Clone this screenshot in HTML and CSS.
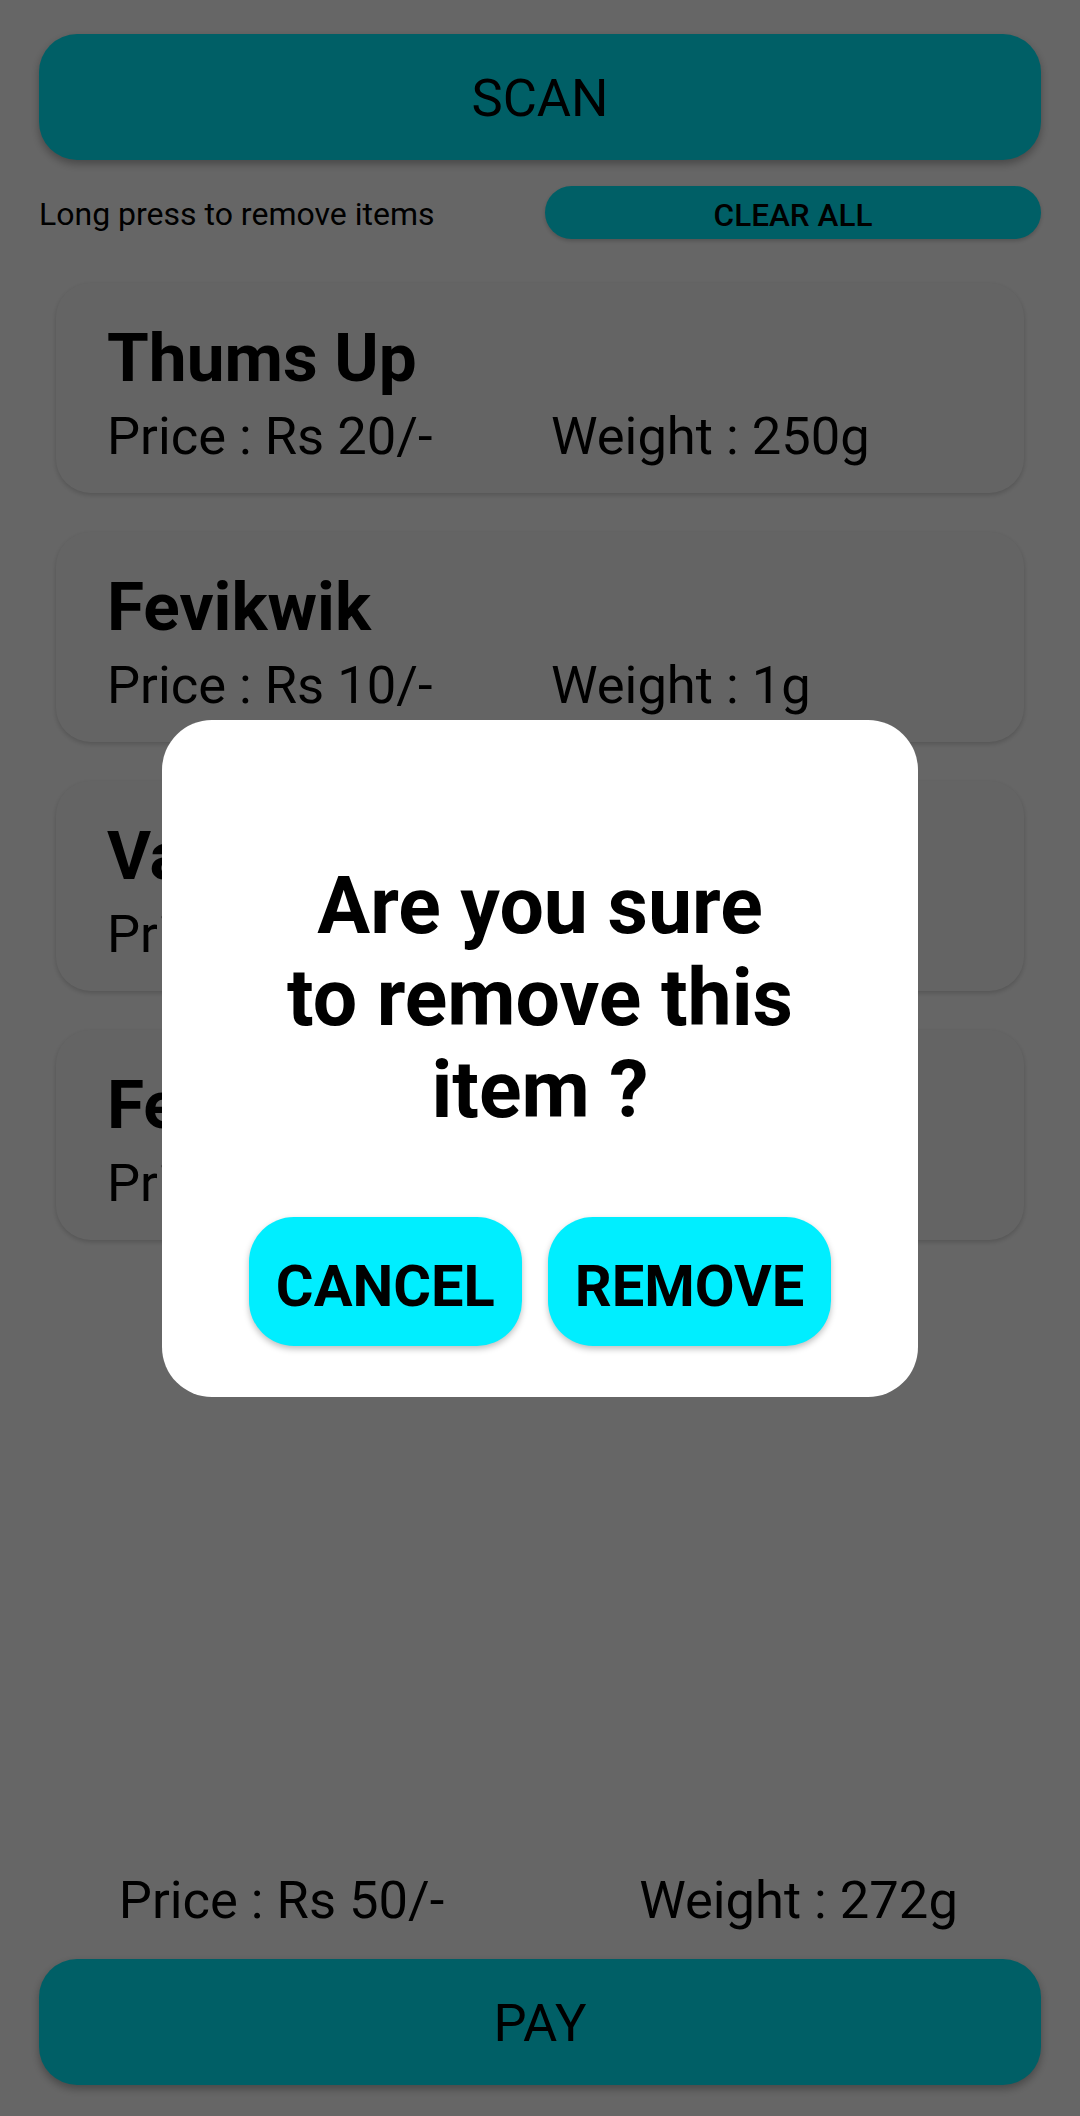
FILE: index.html
```html
<!DOCTYPE html>
<html lang="en">
<head>
<meta charset="utf-8">
<title>Cart</title>
<link rel="stylesheet" href="styles.css">
</head>
<body>
<div class="app">
  <button class="big-btn">SCAN</button>
  <div class="tools">
    <span class="hint">Long press to remove items</span>
    <button class="clear-btn">CLEAR ALL</button>
  </div>
  <div class="list">
    <div class="card">
      <div class="card-title">Thums Up</div>
      <div class="card-row"><span class="col-price">Price : Rs 20/-</span><span>Weight : 250g</span></div>
    </div>
    <div class="card">
      <div class="card-title">Fevikwik</div>
      <div class="card-row"><span class="col-price">Price : Rs 10/-</span><span>Weight : 1g</span></div>
    </div>
    <div class="card">
      <div class="card-title">Vaseline</div>
      <div class="card-row"><span class="col-price">Price : Rs 10/-</span><span>Weight : 20g</span></div>
    </div>
    <div class="card">
      <div class="card-title">Fevicol</div>
      <div class="card-row"><span class="col-price">Price : Rs 10/-</span><span>Weight : 1g</span></div>
    </div>
  </div>
  <div class="totals">
    <span>Price : Rs 50/-</span>
    <span>Weight : 272g</span>
  </div>
  <button class="big-btn">PAY</button>
</div>

<div class="scrim">
  <div class="dialog">
    <div class="dialog-text">Are you sure<br>to remove this<br>item ?</div>
    <div class="dialog-actions">
      <button class="dlg-btn">CANCEL</button>
      <button class="dlg-btn">REMOVE</button>
    </div>
  </div>
</div>
</body>
</html>
```

FILE: styles.css
```css
html, body {
  margin: 0;
  padding: 0;
  background: #ffffff;
  font-family: Roboto, "Noto Sans", "Liberation Sans", sans-serif;
  color: #000;
}

.app {
  box-sizing: border-box;
  height: 2116px;
  padding: 34px 39px 31px;
  display: flex;
  flex-direction: column;
}

button {
  font-family: Roboto, "Noto Sans", "Liberation Sans", sans-serif;
  border: none;
  color: #000;
  cursor: pointer;
  box-sizing: border-box;
}

.big-btn {
  height: 126px;
  width: 100%;
  background: #00eeff;
  border-radius: 38px;
  font-size: 52.5px;
  font-weight: 400;
  box-shadow: 0 4px 8px rgba(0, 0, 0, 0.3);
  padding: 2px 0 0;
}

.tools {
  margin-top: 26px;
  height: 53px;
  display: flex;
  align-items: center;
  justify-content: space-between;
}

.hint {
  font-size: 32px;
  line-height: 1;
  padding-top: 2px;
}

.clear-btn {
  width: 496px;
  height: 53px;
  border-radius: 27px;
  background: #00eeff;
  font-size: 31.5px;
  font-weight: 500;
  padding: 5px 0 0;
  box-shadow: 0 2px 4px rgba(0, 0, 0, 0.2);
}

.list {
  flex: 1;
  margin-top: 44px;
  padding: 0 17px;
  display: flex;
  flex-direction: column;
  gap: 39px;
}

.card {
  box-sizing: border-box;
  height: 210px;
  background: #fbfbfb;
  border-radius: 35px;
  padding: 35px 51px 0;
  box-shadow: 0 2px 5px rgba(0, 0, 0, 0.18);
}

.card-title {
  font-size: 67.5px;
  font-weight: 700;
  line-height: normal;
}

.card-row {
  margin-top: 8px;
  display: flex;
  font-size: 52.5px;
  line-height: normal;
}

.col-price {
  width: 444px;
}

.totals {
  display: grid;
  grid-template-columns: 1fr 1fr;
  margin: 0 -16px 28px;
  font-size: 52.5px;
  line-height: normal;
  text-align: center;
}

.scrim {
  position: fixed;
  inset: 0;
  background: rgba(0, 0, 0, 0.6);
  display: flex;
  align-items: center;
  justify-content: center;
}

.dialog {
  width: 756px;
  box-sizing: border-box;
  background: #ffffff;
  border-radius: 50px;
  padding: 140px 0 51px;
  display: flex;
  flex-direction: column;
  align-items: center;
}

.dialog-text {
  font-size: 78.75px;
  font-weight: 700;
  line-height: normal;
  text-align: center;
}

.dialog-actions {
  margin-top: 81px;
  display: flex;
  gap: 26px;
}

.dlg-btn {
  height: 129px;
  padding: 10px 27px 0;
  background: #00eeff;
  border-radius: 45px;
  font-size: 57.75px;
  font-weight: 700;
  box-shadow: 0 3px 6px rgba(0, 0, 0, 0.25);
}
```
